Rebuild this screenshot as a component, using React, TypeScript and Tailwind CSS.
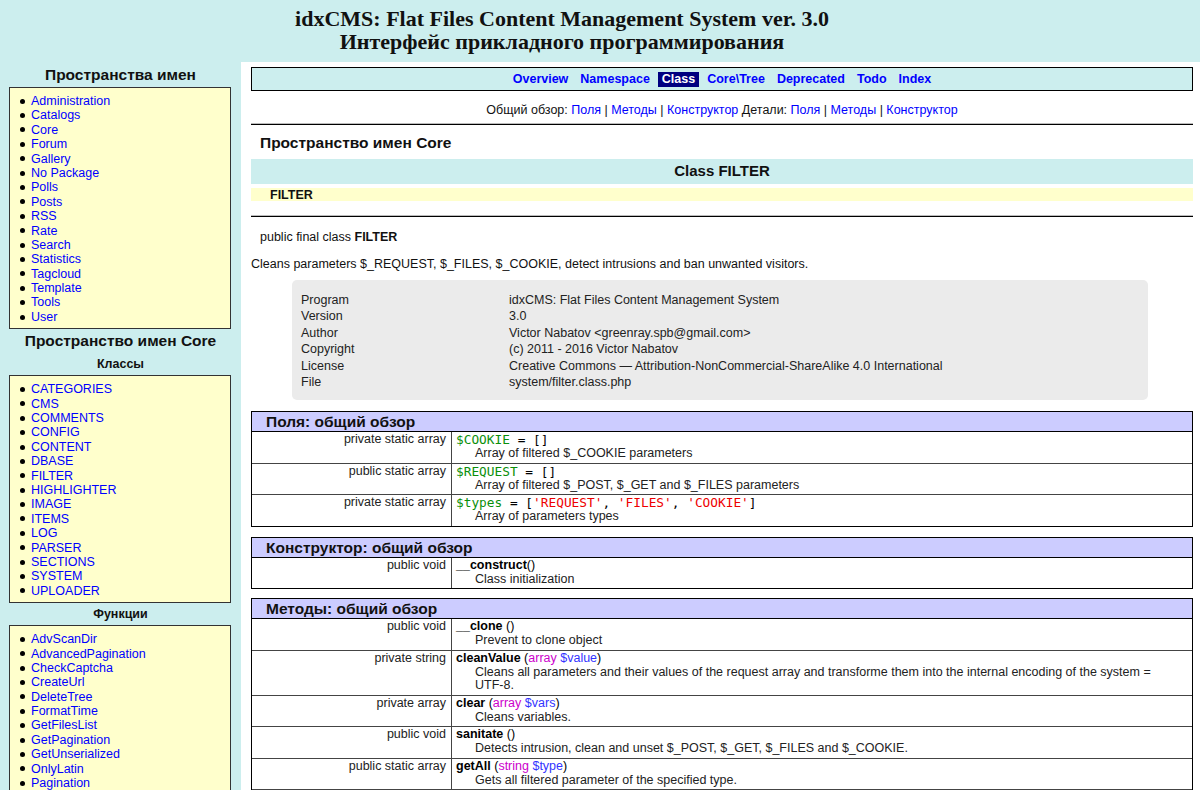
import React from "react";

const ns = ["Administration","Catalogs","Core","Forum","Gallery","No Package","Polls","Posts","RSS","Rate","Search","Statistics","Tagcloud","Template","Tools","User"];
const classes = ["CATEGORIES","CMS","COMMENTS","CONFIG","CONTENT","DBASE","FILTER","HIGHLIGHTER","IMAGE","ITEMS","LOG","PARSER","SECTIONS","SYSTEM","UPLOADER"];
const funcs = ["AdvScanDir","AdvancedPagination","CheckCaptcha","CreateUrl","DeleteTree","FormatTime","GetFilesList","GetPagination","GetUnserialized","OnlyLatin","Pagination","SaveSerialized","ShowWindow"];
const navItems = ["Overview","Namespace","Class","Core\\Tree","Deprecated","Todo","Index"];

function SideList({ items }: { items: string[] }) {
  return (
    <ul className="ml-[9px] w-[222px] border border-[#333] bg-[#ffffcc] pt-[6px] pb-[4px] pl-[10px]">
      {items.map((i) => (
        <li key={i} className="flex items-center h-[14.4px] leading-[14.4px]">
          <span className="w-[5px] h-[5px] rounded-full bg-black mr-[6px] shrink-0" />
          <a className="text-[#0000ff] cursor-pointer">{i}</a>
        </li>
      ))}
    </ul>
  );
}

function Row({ mod, head, desc }: { mod: string; head: React.ReactNode; desc: React.ReactNode }) {
  return (
    <div className="flex">
      <div className="w-[200px] shrink-0 border-r border-[#444] text-right pr-[5px] leading-[15px] text-[#222]">{mod}</div>
      <div className="flex-1 pb-[2px]">
        <div className="pl-[4px] h-[15px] leading-[15px] whitespace-nowrap">{head}</div>
        <div className="pl-[23px] leading-[13.5px] text-[#222]">{desc}</div>
      </div>
    </div>
  );
}

function Table({ title, children }: { title: string; children: React.ReactNode }) {
  return (
    <div className="border border-black">
      <div className="bg-[#ccccff] pl-[14px] text-[15.5px] font-bold leading-[19px] text-[#111]">{title}</div>
      <div className="border-t border-black divide-y divide-[#444]">{children}</div>
    </div>
  );
}

const mono = "font-['DejaVu_Sans_Mono',monospace] text-[12.8px] leading-[15px]";

function Var({ children }: { children: React.ReactNode }) {
  return <span className="text-[#0a8f0a]">{children}</span>;
}
function Str({ children }: { children: React.ReactNode }) {
  return <span className="text-[#ee0000]">{children}</span>;
}
function T({ children }: { children: React.ReactNode }) {
  return <span className="text-[#cc00cc]">{children}</span>;
}
function P({ children }: { children: React.ReactNode }) {
  return <span className="text-[#3333ff]">{children}</span>;
}

export default function App() {
  return (
    <div className="min-h-[790px] bg-[#cceeee] font-['Liberation_Sans',Arial,sans-serif] text-[12.5px] text-black">
      <header className="h-[62px] pt-[8px] pr-[76px] text-center font-['Liberation_Serif',serif] font-bold text-[22px] leading-[22.5px] text-[#111]">
        <div>idxCMS: Flat Files Content Management System ver. 3.0</div>
        <div>Интерфейс прикладного программирования</div>
      </header>
      <div className="flex">
        <aside className="w-[241px] shrink-0">
          <h2 className="pt-[4px] pb-[3px] text-center text-[15.5px] font-bold leading-[18px] text-[#111]">Пространства имен</h2>
          <SideList items={ns} />
          <h2 className="pt-[3px] text-center text-[15.5px] font-bold leading-[18px] text-[#111]">Пространство имен Core</h2>
          <h3 className="mt-[7px] mb-[3px] text-center text-[12.5px] font-bold leading-[15px] text-[#111]">Классы</h3>
          <SideList items={classes} />
          <h3 className="mt-[4px] mb-[3px] text-center text-[12.5px] font-bold leading-[15px] text-[#111]">Функции</h3>
          <SideList items={funcs} />
        </aside>
        <main className="flex-1 min-w-0 bg-white pl-[10px] pr-[7px] pt-[5px] pb-[20px]">
          <nav className="h-[24px] border border-black bg-[#cceeee] flex items-center justify-center gap-[4px] font-bold">
            {navItems.map((n) =>
              n === "Class" ? (
                <span key={n} className="px-[4px] bg-[#000080] text-white leading-[15px]">Class</span>
              ) : (
                <a key={n} className="px-[4px] text-[#0000ff] cursor-pointer">{n}</a>
              )
            )}
          </nav>
          <div className="mt-[12px] text-center leading-[15px] text-[#111]">
            Общий обзор: <a className="text-[#0000ff]">Поля</a> | <a className="text-[#0000ff]">Методы</a> |{" "}
            <a className="text-[#0000ff]">Конструктор</a> Детали: <a className="text-[#0000ff]">Поля</a> |{" "}
            <a className="text-[#0000ff]">Методы</a> | <a className="text-[#0000ff]">Конструктор</a>
          </div>
          <div className="mt-[5px] border-t border-[#bbb]" />
          <div className="border-t border-black" />
          <h2 className="mt-[9px] pl-[9px] text-[15.5px] font-bold leading-[18px] text-[#111]">Пространство имен Core</h2>
          <div className="mt-[7px] h-[25px] bg-[#cceeee] flex items-center justify-center text-[15px] font-bold text-[#111]">Class FILTER</div>
          <div className="mt-[4px] h-[13px] bg-[#ffffcc] pl-[19px] font-bold leading-[14px] text-[#111]">FILTER</div>
          <div className="mt-[14px] border-t border-[#bbb]" />
          <div className="border-t border-black" />
          <div className="mt-[13px] pl-[9px] leading-[15px] text-[#111]">
            public final class <b>FILTER</b>
          </div>
          <div className="mt-[12px] leading-[15px] text-[#111]">
            Cleans parameters $_REQUEST, $_FILES, $_COOKIE, detect intrusions and ban unwanted visitors.
          </div>
          <div className="mt-[8px] ml-[41px] mr-[45px] rounded-[5px] bg-[#ebebeb] pt-[12px] pb-[10px] pl-[9px] text-[#222]">
            {[
              ["Program", "idxCMS: Flat Files Content Management System"],
              ["Version", "3.0"],
              ["Author", "Victor Nabatov <greenray.spb@gmail.com>"],
              ["Copyright", "(c) 2011 - 2016 Victor Nabatov"],
              ["License", "Creative Commons — Attribution-NonCommercial-ShareAlike 4.0 International"],
              ["File", "system/filter.class.php"],
            ].map(([k, v]) => (
              <div key={k} className="flex leading-[16.4px]">
                <div className="w-[208px] shrink-0">{k}</div>
                <div>{v}</div>
              </div>
            ))}
          </div>

          <div className="mt-[11px]">
            <Table title="Поля: общий обзор">
              <Row
                mod="private static array"
                head={<span className={mono}><Var>$COOKIE</Var> = []</span>}
                desc="Array of filtered $_COOKIE parameters"
              />
              <Row
                mod="public static array"
                head={<span className={mono}><Var>$REQUEST</Var> = []</span>}
                desc="Array of filtered $_POST, $_GET and $_FILES parameters"
              />
              <Row
                mod="private static array"
                head={
                  <span className={mono}>
                    <Var>$types</Var> = [<Str>'REQUEST'</Str>, <Str>'FILES'</Str>, <Str>'COOKIE'</Str>]
                  </span>
                }
                desc="Array of parameters types"
              />
            </Table>
          </div>

          <div className="mt-[10px]">
            <Table title="Конструктор: общий обзор">
              <Row mod="public void" head={<span><b>__construct</b>()</span>} desc="Class initialization" />
            </Table>
          </div>

          <div className="mt-[9px]">
            <Table title="Методы: общий обзор">
              <Row mod="public void" head={<span><b>__clone</b> ()</span>} desc="Prevent to clone object" />
              <Row
                mod="private string"
                head={<span><b>cleanValue</b> (<T>array</T> <P>$value</P>)</span>}
                desc={
                  <>
                    Cleans all parameters and their values of the request array and transforme them into the internal encoding of the system =
                    <br />
                    UTF-8.
                  </>
                }
              />
              <Row mod="private array" head={<span><b>clear</b> (<T>array</T> <P>$vars</P>)</span>} desc="Cleans variables." />
              <Row mod="public void" head={<span><b>sanitate</b> ()</span>} desc="Detects intrusion, clean and unset $_POST, $_GET, $_FILES and $_COOKIE." />
              <Row mod="public static array" head={<span><b>getAll</b> (<T>string</T> <P>$type</P>)</span>} desc="Gets all filtered parameter of the specified type." />
              <Row mod="public static mixed" head={<span><b>getValue</b> (<T>string</T> <P>$type</P>, <T>string</T> <P>$name</P>)</span>} desc="Gets the filtered value of the parameter." />
            </Table>
          </div>
        </main>
      </div>
    </div>
  );
}
